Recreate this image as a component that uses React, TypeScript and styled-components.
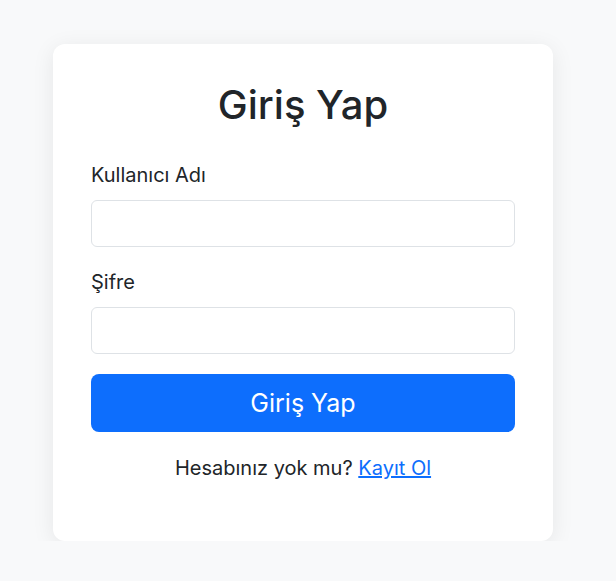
import React from "react";
import styled, { createGlobalStyle } from "styled-components";

const Global = createGlobalStyle`
  html, body { margin: 0; padding: 0; }
  body {
    background: #f8f9fa;
    font-family: Inter, "Noto Sans", "Liberation Sans", sans-serif;
    color: #212529;
    font-size: 20px;
  }
`;

const Page = styled.div`
  padding: 44px 0 0 53px;
`;

const Card = styled.form`
  box-sizing: border-box;
  width: 500px;
  height: 497px;
  background: #fff;
  border-radius: 12px;
  box-shadow: 0 4px 22px rgba(0, 0, 0, 0.08);
  padding: 37px 38px;
  display: flex;
  flex-direction: column;
`;

const Title = styled.h2`
  margin: 0 0 31px;
  text-align: center;
  font-size: 40px;
  font-weight: 500;
  line-height: 48px;
`;

const Field = styled.div`
  display: flex;
  flex-direction: column;
  margin-bottom: 20px;
`;

const Label = styled.label`
  font-size: 20px;
  line-height: 30px;
  margin-bottom: 10px;
`;

const Input = styled.input`
  box-sizing: border-box;
  height: 47px;
  border: 1px solid #dee2e6;
  border-radius: 6px;
  padding: 0 12px;
  font-size: 20px;
  font-family: inherit;
  outline: none;
`;

const Button = styled.button`
  height: 58px;
  border: none;
  border-radius: 8px;
  background: #0d6efd;
  color: #fff;
  font-family: inherit;
  font-size: 25px;
  cursor: pointer;
`;

const Footer = styled.p`
  margin: 21px 0 0;
  text-align: center;
  font-size: 20px;
  line-height: 30px;
`;

const Link = styled.a`
  color: #0d6efd;
  text-decoration: underline;
`;

export default function App() {
  return (
    <>
      <Global />
      <Page>
        <Card onSubmit={(e) => e.preventDefault()}>
          <Title>Giriş Yap</Title>
          <Field>
            <Label>Kullanıcı Adı</Label>
            <Input type="text" />
          </Field>
          <Field>
            <Label>Şifre</Label>
            <Input type="password" />
          </Field>
          <Button type="submit">Giriş Yap</Button>
          <Footer>
            Hesabınız yok mu? <Link href="#">Kayıt Ol</Link>
          </Footer>
        </Card>
      </Page>
    </>
  );
}
